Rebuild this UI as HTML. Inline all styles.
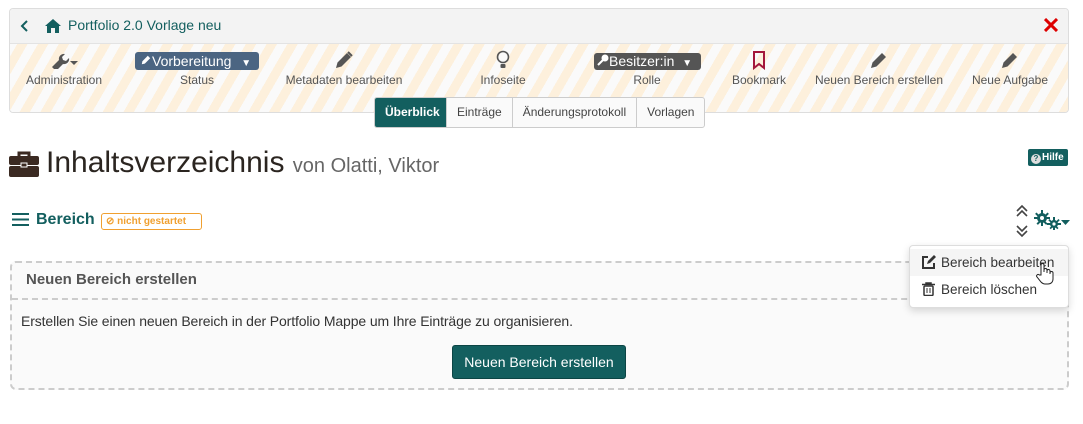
<!DOCTYPE html>
<html><head><meta charset="utf-8">
<style>
*{margin:0;padding:0;box-sizing:border-box}
body{width:1083px;height:424px;background:#fff;font-family:"Liberation Sans",sans-serif;color:#333;position:relative;overflow:hidden}
.a{position:absolute}
.tb{left:9px;top:8px;width:1060px;height:105px;border:1px solid #ddd;border-radius:4px;overflow:hidden}
.hdr{left:0;top:0;width:100%;height:35px;background:#f3f3f3;border-bottom:1px solid #e3e3e3}
.str{left:0;top:35px;width:100%;height:70px;background:repeating-linear-gradient(-60deg,#fdf0dc 0 9px,#fafafa 9px 18px)}
.lbl{font-size:12px;color:#555;text-align:center;width:160px;top:66px}
.ico{top:43px;width:160px;text-align:center}
.tabs{left:374px;top:97px;height:31px;display:flex;border:1px solid #ccc;border-radius:3px;background:#fafafa;overflow:hidden}
.tabs div{font-size:12px;padding:0 10px;line-height:29px;color:#444;border-left:1px solid #ccc}
.tabs div:first-child{background:#135f5f;color:#fff;font-weight:bold;border:none}
</style></head><body>
<div class="a tb">
 <div class="a hdr"></div>
 <div class="a str"></div>
 <svg class="a" style="left:10px;top:10px" width="10" height="14" viewBox="0 0 10 14"><path d="M7 2L2 7l5 5" stroke="#135f5f" stroke-width="2" fill="none"/></svg>
 <svg class="a" style="left:35px;top:10px" width="16" height="14" viewBox="0 0 16 14"><path d="M8 0L0 7h2v7h4V9h4v5h4V7h2z" fill="#135f5f"/></svg>
 <div class="a" style="left:58px;top:8px;font-size:14px;color:#135f5f">Portfolio 2.0 Vorlage neu</div>
 <svg class="a" style="left:1034px;top:9px" width="14" height="14" viewBox="0 0 14 14"><path d="M1 1l12 12M13 1L1 13" stroke="#d00" stroke-width="3"/></svg>
</div>
<div class="a ico" style="left:-16px;top:51px"><svg width="30" height="18" viewBox="0 0 30 18"><path d="M3 16l7-7a5 5 0 0 1 6-6l-3 3 1 3 3 1 3-3a5 5 0 0 1-6 6l-7 7z" fill="#555"/><path d="M21 10h8l-4 4z" fill="#555"/></svg></div>
<div class="a lbl" style="left:-16px;top:73px">Administration</div>
<div class="a" style="left:135px;top:52px;width:124px;height:18px;background:#4b6582;border-radius:3px;color:#fff;font-size:14px;line-height:18px;padding-left:5px;white-space:nowrap"><svg width="12" height="12" viewBox="0 0 20 20"><path d="M3 17l1-5 9-9 4 4-9 9z" fill="#fff"/></svg>Vorbereitung <span style="font-size:10px;margin-left:6px">▼</span></div>
<div class="a lbl" style="left:117px;top:73px">Status</div>
<div class="a ico" style="left:264px;top:50px"><svg width="20" height="20" viewBox="0 0 20 20"><path d="M2 18l1.5-5.5L13 3l4 4-9.5 9.5z" fill="#555"/><path d="M14 2l4 4" stroke="#555" stroke-width="2"/></svg></div>
<div class="a lbl" style="left:264px;top:73px">Metadaten bearbeiten</div>
<div class="a ico" style="left:423px;top:50px"><svg width="14" height="20" viewBox="0 0 14 20"><circle cx="7" cy="7" r="5.5" stroke="#555" stroke-width="1.6" fill="none"/><rect x="4.5" y="14" width="5" height="4" rx="1" fill="#555"/></svg></div>
<div class="a lbl" style="left:423px;top:73px">Infoseite</div>
<div class="a" style="left:594px;top:53px;width:107px;height:17px;background:#555;border-radius:3px;color:#fff;font-size:14px;line-height:17px;padding-left:3px;white-space:nowrap"><svg width="12" height="12" viewBox="0 0 12 12"><circle cx="8" cy="4" r="3.5" fill="#fff"/><path d="M6 6L1 11" stroke="#fff" stroke-width="2"/></svg>Besitzer:in <span style="font-size:10px;margin-left:4px">▼</span></div>
<div class="a lbl" style="left:567px;top:73px">Rolle</div>
<div class="a ico" style="left:679px;top:50px"><svg width="14" height="20" viewBox="0 0 14 20"><path d="M2 2h10v16l-5-4-5 4z" stroke="#a3173b" stroke-width="2" fill="none"/></svg></div>
<div class="a lbl" style="left:679px;top:73px">Bookmark</div>
<div class="a ico" style="left:799px;top:50px"><svg width="20" height="20" viewBox="0 0 20 20"><path d="M2 18l1.5-5.5L13 3l4 4-9.5 9.5z" fill="#555"/></svg></div>
<div class="a lbl" style="left:799px;top:73px">Neuen Bereich erstellen</div>
<div class="a ico" style="left:930px;top:50px"><svg width="20" height="20" viewBox="0 0 20 20"><path d="M2 18l1.5-5.5L13 3l4 4-9.5 9.5z" fill="#555"/></svg></div>
<div class="a lbl" style="left:930px;top:73px">Neue Aufgabe</div>
<div class="a tabs"><div style="width:71px">Überblick</div><div>Einträge</div><div>Änderungsprotokoll</div><div>Vorlagen</div></div>

<svg class="a" style="left:9px;top:151px" width="30" height="26" viewBox="0 0 30 26"><path d="M10 5V2h10v3" stroke="#3b2a22" stroke-width="3" fill="none"/><rect x="0" y="5" width="30" height="9" rx="2" fill="#3b2a22"/><rect x="0" y="15" width="30" height="11" rx="2" fill="#3b2a22"/><rect x="12" y="12" width="6" height="4" fill="#3b2a22" stroke="#fff"/></svg>
<div class="a" style="left:46px;top:146px;font-size:30px;color:#2b2520;white-space:nowrap">Inhaltsverzeichnis <span style="font-size:20px;color:#666">von Olatti, Viktor</span></div>
<div class="a" style="left:1028px;top:149px;width:40px;height:17px;background:#135f5f;border-radius:2px;color:#fff;font-size:10px;font-weight:bold;line-height:17px;padding-left:3px;white-space:nowrap"><span style="display:inline-block;width:10px;height:10px;border-radius:5px;background:#ddd;color:#135f5f;font-size:8px;text-align:center;line-height:10px;vertical-align:-1px;margin-right:1px">?</span>Hilfe</div>

<svg class="a" style="left:12px;top:212px" width="17" height="15" viewBox="0 0 17 15"><path d="M0 2h17M0 7.5h17M0 13h17" stroke="#135f5f" stroke-width="2"/></svg>
<div class="a" style="left:36px;top:211px;font-size:16px;color:#135f5f;font-weight:bold">Bereich</div>
<div class="a" style="left:101px;top:213px;width:101px;height:17px;border:1px solid #f0a030;border-radius:3px;color:#f0a030;font-size:10px;font-weight:bold;line-height:15px;padding-left:4px;white-space:nowrap">⊘ nicht gestartet</div>
<svg class="a" style="left:1015px;top:204px" width="14" height="34" viewBox="0 0 14 34"><path d="M2 7l5-5 5 5M2 12l5-5 5 5M2 22l5 5 5-5M2 27l5 5 5-5" stroke="#444" stroke-width="1.6" fill="none"/></svg>
<svg class="a" style="left:1034px;top:210px" width="38" height="20" viewBox="0 0 38 20"><g fill="#135f5f"><circle cx="8" cy="8" r="5"/><path d="M7 0h2v16H7zM0 7h16v2H0zM2.5 2.5l11 11-1.4 1.4-11-11zM13.5 2.5l-11 11 1.4 1.4 11-11z"/><circle cx="20" cy="14" r="4"/><path d="M19 7h2v14h-2zM13 13h14v2H13zM15.5 9l9 9-1.2 1.2-9-9zM24.5 9l-9 9 1.2 1.2 9-9z"/></g><circle cx="8" cy="8" r="2" fill="#fff"/><circle cx="20" cy="14" r="1.6" fill="#fff"/><path d="M27 10h9l-4.5 5z" fill="#135f5f"/></svg>

<div class="a" style="left:10px;top:261px;width:1059px;height:129px;border:2px dashed #ccc;border-radius:6px;background:#fafafa"></div>
<div class="a" style="left:12px;top:298px;width:1055px;border-top:2px dashed #ccc"></div>
<div class="a" style="left:26px;top:271px;font-size:15px;font-weight:bold;color:#555">Neuen Bereich erstellen</div>
<div class="a" style="left:21px;top:313px;font-size:14px;color:#333;letter-spacing:-0.12px;white-space:nowrap">Erstellen Sie einen neuen Bereich in der Portfolio Mappe um Ihre Einträge zu organisieren.</div>
<div class="a" style="left:452px;top:345px;width:174px;height:34px;background:#135f5f;border-radius:3px;color:#fff;font-size:14px;text-align:center;line-height:32px;border:1px solid #0c4545">Neuen Bereich erstellen</div>

<div class="a" style="left:909px;top:245px;width:160px;height:63px;background:#fff;border:1px solid #ddd;border-radius:4px;box-shadow:0 3px 8px rgba(0,0,0,.15)">
 <div style="background:#f5f5f5;height:27px;margin-top:3px;padding-left:11px;font-size:13.5px;line-height:27px;color:#333;white-space:nowrap"><svg width="15" height="14" viewBox="0 0 15 14" style="vertical-align:-2px;margin-right:5px"><path d="M7 2H2v11h11V8" stroke="#333" stroke-width="2" fill="none"/><path d="M6 9l1-3 6-6 2 2-6 6z" fill="#333"/></svg>Bereich bearbeiten</div>
 <div style="padding-left:12px;font-size:13.5px;line-height:27px;color:#333;white-space:nowrap"><svg width="13" height="14" viewBox="0 0 13 14" style="vertical-align:-2px;margin-right:6px"><path d="M0 2.5h13M4 2.5V1h5v1.5" stroke="#333" stroke-width="1.5" fill="none"/><rect x="2" y="4" width="9" height="9.5" rx="1" stroke="#333" stroke-width="1.5" fill="none"/><path d="M5 6v5M8 6v5" stroke="#333"/></svg>Bereich löschen</div>
</div>
<svg class="a" style="left:1036px;top:262px" width="18" height="24" viewBox="0 0 18 24"><path d="M5 13V3a1.5 1.5 0 0 1 3 0v7V8a1.5 1.5 0 0 1 3 0v3-2a1.5 1.5 0 0 1 3 0v3-1a1.5 1.5 0 0 1 3 0v6c0 3-2 5-5 5H9c-2 0-3-1-4-2l-4-5a1.5 1.5 0 0 1 2.3-2z" fill="#fff" stroke="#222" stroke-width="1"/></svg>
</body></html>
